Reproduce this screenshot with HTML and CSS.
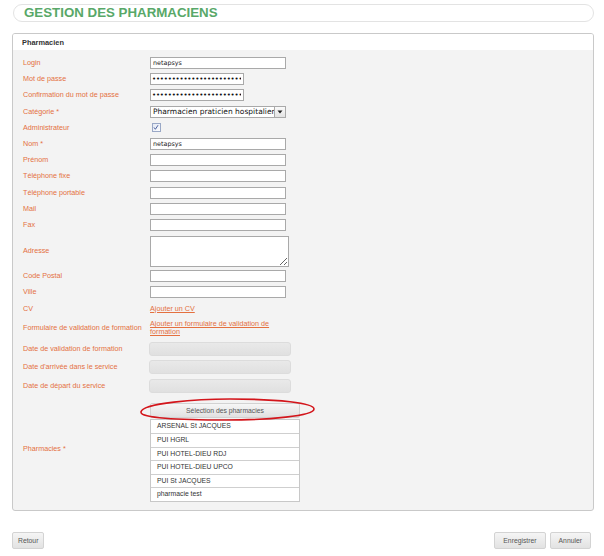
FILE: index.html
```html
<!DOCTYPE html>
<html lang="fr">
<head>
<meta charset="utf-8">
<title>Gestion des pharmaciens</title>
<link rel="stylesheet" href="styles.css">
</head>
<body>
<div class="page">
  <h1 class="title">GESTION DES PHARMACIENS</h1>
  <div class="panel">
    <div class="panel-head">Pharmacien</div>
    <div class="panel-body">
      <div class="row"><label>Login</label><div class="field"><input class="txt" type="text" value="netapsys"></div></div>
      <div class="row"><label>Mot de passe</label><div class="field"><input class="txt pwd" type="password" value="netapsysnetapsysnetapsysnetapsys"></div></div>
      <div class="row"><label>Confirmation du mot de passe</label><div class="field"><input class="txt pwd" type="password" value="netapsysnetapsysnetapsysnetapsys"></div></div>
      <div class="row"><label>Catégorie *</label>
        <div class="field">
          <div class="select">
            <span class="select-val">Pharmacien praticien hospitalier</span>
            <span class="select-btn"><svg width="6" height="4" viewBox="0 0 6 4"><path d="M0.5 0.5h5L3 3.5z" fill="#222"/></svg></span>
          </div>
        </div>
      </div>
      <div class="row"><label>Administrateur</label>
        <div class="field"><span class="check"><svg width="9" height="9" viewBox="0 0 9 9"><path d="M2.2 4.4l1.6 2.1L6.8 1.9" fill="none" stroke="#4a5f9e" stroke-width="1.1"/></svg></span></div>
      </div>
      <div class="row"><label>Nom *</label><div class="field"><input class="txt" type="text" value="netapsys"></div></div>
      <div class="row"><label>Prénom</label><div class="field"><input class="txt" type="text"></div></div>
      <div class="row"><label>Téléphone fixe</label><div class="field"><input class="txt" type="text"></div></div>
      <div class="row"><label>Téléphone portable</label><div class="field"><input class="txt" type="text"></div></div>
      <div class="row"><label>Mail</label><div class="field"><input class="txt" type="text"></div></div>
      <div class="row"><label>Fax</label><div class="field"><input class="txt" type="text"></div></div>
      <div class="row row-area"><label>Adresse</label><div class="field"><textarea class="area"></textarea></div></div>
      <div class="row"><label>Code Postal</label><div class="field"><input class="txt" type="text"></div></div>
      <div class="row"><label>Ville</label><div class="field"><input class="txt" type="text"></div></div>
      <div class="row"><label>CV</label><div class="field"><a class="link" href="#">Ajouter un CV</a></div></div>
      <div class="row row-two"><label>Formulaire de validation de formation</label><div class="field"><a class="link wrap" href="#">Ajouter un formulaire de validation de formation</a></div></div>
      <div class="row row-date"><label>Date de validation de formation</label><div class="field"><input class="date" type="text" disabled></div></div>
      <div class="row row-date"><label>Date d'arrivée dans le service</label><div class="field"><input class="date" type="text" disabled></div></div>
      <div class="row row-date"><label>Date de départ du service</label><div class="field"><input class="date" type="text" disabled></div></div>
      <div class="row row-pharma"><label class="pharma-label">Pharmacies *</label>
        <div class="field">
          <div class="pharma">
            <button class="sel-btn" type="button">Sélection des pharmacies</button>
            <svg class="circle" width="179" height="26" viewBox="0 0 179 26"><path d="M3 15 C 4 6, 60 2, 92 2 C 140 2, 176 6, 176 12 C 176 19, 130 23, 88 23 C 40 23, 2 21, 3 15 Z" fill="none" stroke="#d3151b" stroke-width="1.6"/></svg>
            <ul class="list">
              <li>ARSENAL St JACQUES</li>
              <li>PUI HGRL</li>
              <li>PUI HOTEL-DIEU RDJ</li>
              <li>PUI HOTEL-DIEU UPCO</li>
              <li>PUI St JACQUES</li>
              <li>pharmacie test</li>
            </ul>
          </div>
        </div>
      </div>
    </div>
  </div>
  <div class="footer">
    <button class="btn" type="button">Retour</button>
    <div class="footer-right">
      <button class="btn btn-wide" type="button">Enregistrer</button>
      <button class="btn btn-wide" type="button">Annuler</button>
    </div>
  </div>
</div>
</body>
</html>
```

FILE: styles.css
```css
html, body {
  margin: 0;
  padding: 0;
  background: #ffffff;
}

.page {
  width: 604px;
  height: 556px;
  box-sizing: border-box;
  padding: 4px 10px 0 12px;
  font-family: "Liberation Sans", Arial, sans-serif;
}

.title {
  margin: 0 0 0 1px;
  height: 18px;
  box-sizing: border-box;
  border: 1px solid #e3e3e3;
  border-radius: 10px;
  padding-left: 10px;
  font-size: 13.3px;
  line-height: 16px;
  font-weight: bold;
  color: #58a868;
  background: #fff;
}

.panel {
  margin-top: 11px;
  border: 1px solid #c9c9c9;
  border-radius: 3px;
  background: #f3f3f3;
  overflow: hidden;
}

.panel-head {
  height: 16px;
  background: #fff;
  padding-left: 9px;
  font-size: 7.4px;
  font-weight: bold;
  line-height: 18px;
  color: #333;
}

.panel-body {
  padding: 5px 0 8px 10px;
}

.row {
  display: grid;
  grid-template-columns: 127px 1fr;
  align-items: center;
  min-height: 16.2px;
}

.row label {
  font-size: 7.2px;
  color: #e4703f;
  line-height: 8px;
}

.field {
  display: flex;
  align-items: center;
}

.txt {
  width: 136px;
  height: 12px;
  box-sizing: border-box;
  margin: 0;
  border: 1px solid #a9a9a9;
  padding: 0 2px;
  font-family: "DejaVu Sans", Verdana, sans-serif;
  font-size: 6.4px;
  color: #222;
  background: #fff;
  outline: none;
}

.pwd {
  width: 94px;
  font-size: 7px;
  letter-spacing: -0.2px;
  padding-left: 1px;
  color: #111;
}

.select {
  display: flex;
  width: 136px;
  height: 12px;
  box-sizing: border-box;
  border: 1px solid #a9a9a9;
  background: #fff;
  overflow: hidden;
}

.select-val {
  flex: 1;
  overflow: hidden;
  white-space: nowrap;
  font-family: "DejaVu Sans", Verdana, sans-serif;
  font-size: 7.5px;
  line-height: 10px;
  padding-left: 2px;
  color: #111;
}

.select-btn {
  width: 11px;
  height: 10px;
  box-sizing: border-box;
  border-left: 1px solid #a9a9a9;
  background: linear-gradient(#fafafa, #e3e3e3);
  display: flex;
  align-items: center;
  justify-content: center;
}

.check {
  display: inline-flex;
  width: 9px;
  height: 9px;
  box-sizing: border-box;
  margin-left: 2px;
  border: 1px solid #9aa8c6;
  background: linear-gradient(135deg, #e3e8f3, #fbfcfe);
}

.check svg {
  margin: -1px 0 0 -1px;
}

.row-area {
  min-height: 35px;
}

.area {
  width: 139px;
  height: 31px;
  box-sizing: border-box;
  margin: 1px 0 0;
  border: 1px solid #a9a9a9;
  background: #fff;
  padding: 1px;
  display: block;
}

.link {
  font-size: 7.2px;
  line-height: 8px;
  color: #e4703f;
  text-decoration: underline;
}

.wrap {
  display: block;
  width: 130px;
}

.row-two {
  min-height: 23px;
}

.row-date {
  min-height: 18.4px;
}

.date {
  width: 142px;
  height: 14px;
  box-sizing: border-box;
  margin: 0 0 0 -1px;
  border: 1px solid #dcdcdc;
  border-radius: 3px;
  background: linear-gradient(#e9e9e9, #e0e0e0);
}

.row-pharma {
  padding-top: 8px;
}

.pharma-label {
  padding-bottom: 6px;
}

.pharma {
  position: relative;
  width: 150px;
}

.sel-btn {
  display: block;
  width: 150px;
  height: 15px;
  margin: 0;
  border: 1px solid #d2d2d2;
  border-radius: 2px;
  background: linear-gradient(#f6f6f6, #e1e1e1);
  font-family: "Liberation Sans", Arial, sans-serif;
  font-size: 6.8px;
  color: #555;
  padding: 0;
}

.circle {
  position: absolute;
  left: -12px;
  top: -6px;
}

.list {
  list-style: none;
  margin: 1px 0 0;
  padding: 0;
  border: 1px solid #c8c8c8;
  background: #fff;
}

.list li {
  height: 13.5px;
  box-sizing: border-box;
  border-top: 1px solid #cfcfcf;
  padding-left: 6px;
  font-size: 6.8px;
  line-height: 12.5px;
  color: #333;
}

.list li:first-child {
  border-top: none;
}

.footer {
  display: flex;
  justify-content: space-between;
  align-items: center;
  margin-top: 21px;
  padding-right: 3px;
}

.footer-right {
  display: flex;
  gap: 4px;
}

.btn {
  height: 17px;
  margin: 0;
  padding: 0 5px;
  border: 1px solid #d3d3d3;
  border-radius: 2px;
  background: linear-gradient(#f5f5f5, #e2e2e2);
  font-family: "Liberation Sans", Arial, sans-serif;
  font-size: 6.8px;
  color: #555;
}

.btn-wide {
  padding: 0 8px;
}
```
